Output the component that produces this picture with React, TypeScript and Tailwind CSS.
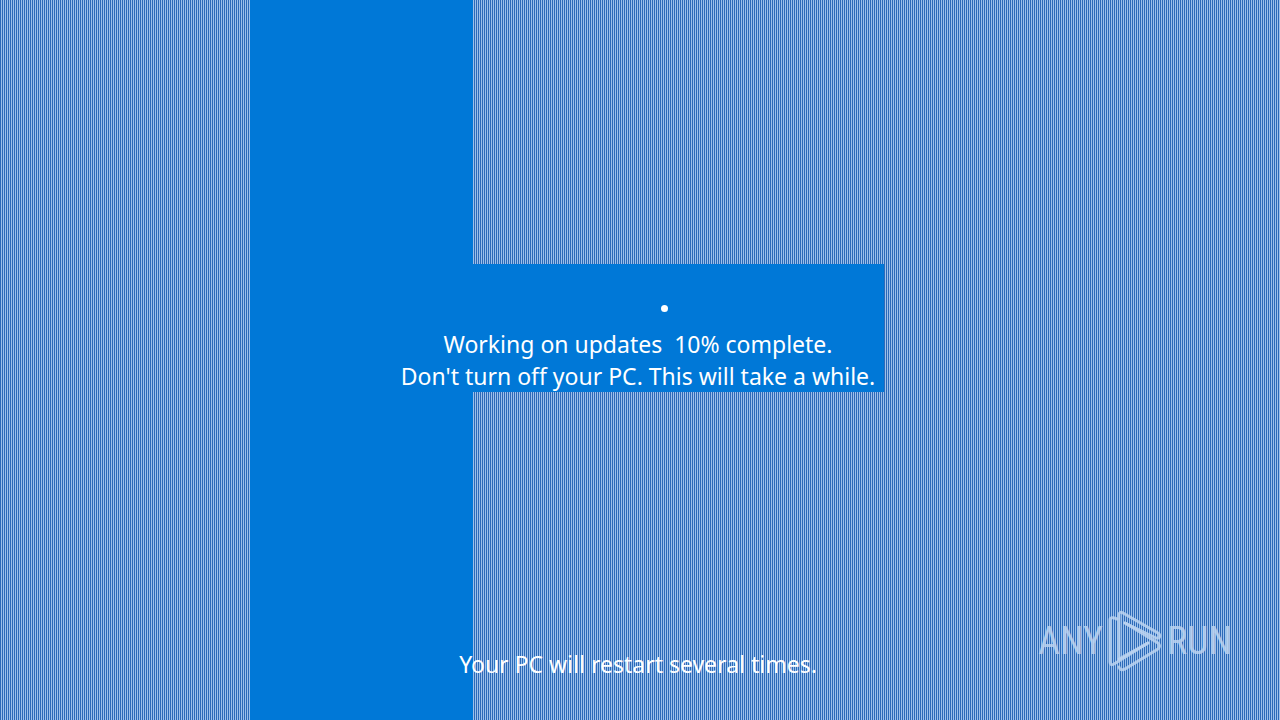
const AnyRunMark = () => {
  return (
    <svg
      viewBox="0 0 56 62"
      className="h-[62px] w-14"
      fill="none"
      stroke="currentColor"
      strokeWidth="3"
      strokeLinejoin="round"
      strokeLinecap="round"
      aria-hidden="true"
    >
      <path d="M12 49 V5 Q12 1 16 3 L51 23 Q54 25 52 28 L49 28 L18 13" />
      <path d="M10 9 Q3 6 3 10 V52 Q3 56 7 54 L41 33" />
      <path d="M12 57 Q13 61 18 59 L51 39 Q54 36 51 33 L18 13" />
      <path d="M12 49 L41 33" />
    </svg>
  );
};

const Watermark = () => {
  return (
    <div className="absolute right-12 bottom-12 flex items-center gap-1 font-['Roboto_Condensed','Liberation_Sans_Narrow','Liberation_Sans',sans-serif] text-[38px] text-[#bcd4f0]/85">
      <span>ANY</span>
      <AnyRunMark />
      <span>RUN</span>
    </div>
  );
};

const App = () => {
  return (
    <main className="relative grid min-h-screen grid-cols-[250fr_223fr_411fr_396fr] grid-rows-[264fr_128fr_328fr] bg-[repeating-linear-gradient(90deg,#2c6ab8_0_1px,#9cc0ea_1px_2px)] font-['Noto_Sans','Open_Sans',sans-serif] text-[23px] text-white">
      {/* Painted areas */}
      <div className="col-start-2 row-span-3 row-start-1 bg-[#0078d7]" />
      <div className="col-start-3 row-start-2 bg-[#0078d7]" />

      {/* Update progress */}
      <section className="col-span-4 col-start-1 row-start-2 flex flex-col items-center pt-[41px] pr-1 text-center leading-8">
        <div className="mb-4 ml-13 size-[7px] rounded-full bg-white" />
        <p className="whitespace-pre">Working on updates  10% complete.</p>
        <p>Don't turn off your PC. This will take a while.</p>
      </section>

      <p className="col-span-4 col-start-1 row-start-3 self-end pr-1 pb-10 text-center leading-8">
        Your PC will restart several times.
      </p>

      <Watermark />
    </main>
  );
};

export default App;
